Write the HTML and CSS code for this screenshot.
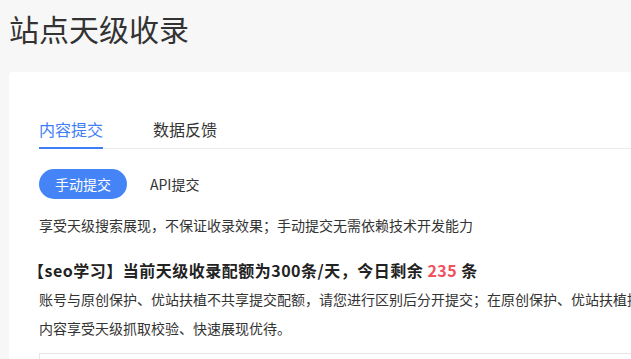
FILE: index.html
```html
<!DOCTYPE html>
<html lang="zh-CN">
<head>
<meta charset="utf-8">
<title>站点天级收录</title>
<link rel="stylesheet" href="styles.css">
</head>
<body>
<div class="page">
  <h1 class="page-title">站点天级收录</h1>
  <div class="card">
    <div class="tabs">
      <div class="tab tab-active">内容提交</div>
      <div class="tab">数据反馈</div>
    </div>
    <div class="modes">
      <span class="mode mode-active">手动提交</span>
      <span class="mode">API提交</span>
    </div>
    <p class="desc">享受天级搜索展现，不保证收录效果；手动提交无需依赖技术开发能力</p>
    <h2 class="quota">【seo学习】当前天级收录配额为300条/天，今日剩余 <span class="num">235</span> 条</h2>
    <p class="note">账号与原创保护、优站扶植不共享提交配额，请您进行区别后分开提交；在原创保护、优站扶植提交的内容享受天级抓取校验、快速展现优待。</p>
    <div class="input-box"></div>
  </div>
</div>
</body>
</html>
```
FILE: styles.css
```css
html, body {
  margin: 0;
  padding: 0;
  background: #f7f7f7;
  overflow: hidden;
}
body {
  font-family: "Noto Sans CJK SC", "Noto Sans", sans-serif;
  color: #333;
}
.page {
  padding: 8px 0 0 9px;
  width: 760px;
}
.page-title {
  margin: 0 0 24px;
  font-size: 30px;
  line-height: 40px;
  font-weight: normal;
  color: #333;
}
.card {
  background: #fff;
  border-radius: 4px;
  padding: 45px 30px 30px;
  width: 640px;
  height: 400px;
}
.tabs {
  display: flex;
  gap: 50px;
  border-bottom: 1px solid #ebebeb;
}
.tab {
  font-size: 16px;
  line-height: 24px;
  padding-bottom: 6px;
  border-bottom: 2px solid transparent;
  margin-bottom: -1px;
  color: #333;
}
.tab-active {
  color: #3f7ef6;
  border-bottom-color: #3f7ef6;
}
.modes {
  display: flex;
  align-items: center;
  gap: 23px;
  margin-top: 20px;
}
.mode {
  font-size: 14px;
  line-height: 30px;
  color: #333;
}
.mode-active {
  background: #4584f6;
  color: #fff;
  border-radius: 15px;
  padding: 0 16px;
}
.desc {
  margin: 16px 0 0;
  font-size: 14px;
  line-height: 20px;
  color: #333;
}
.quota {
  margin: 23px 0 0 -11px;
  font-size: 16px;
  line-height: 24px;
  font-weight: bold;
  letter-spacing: 0.5px;
  color: #222;
}
.num {
  color: #f1505c;
}
.note {
  margin: 3px 0 0;
  font-size: 14px;
  line-height: 29px;
  color: #333;
}
.input-box {
  margin-top: 10px;
  border: 1px solid #e6e6e6;
  height: 120px;
}
```
